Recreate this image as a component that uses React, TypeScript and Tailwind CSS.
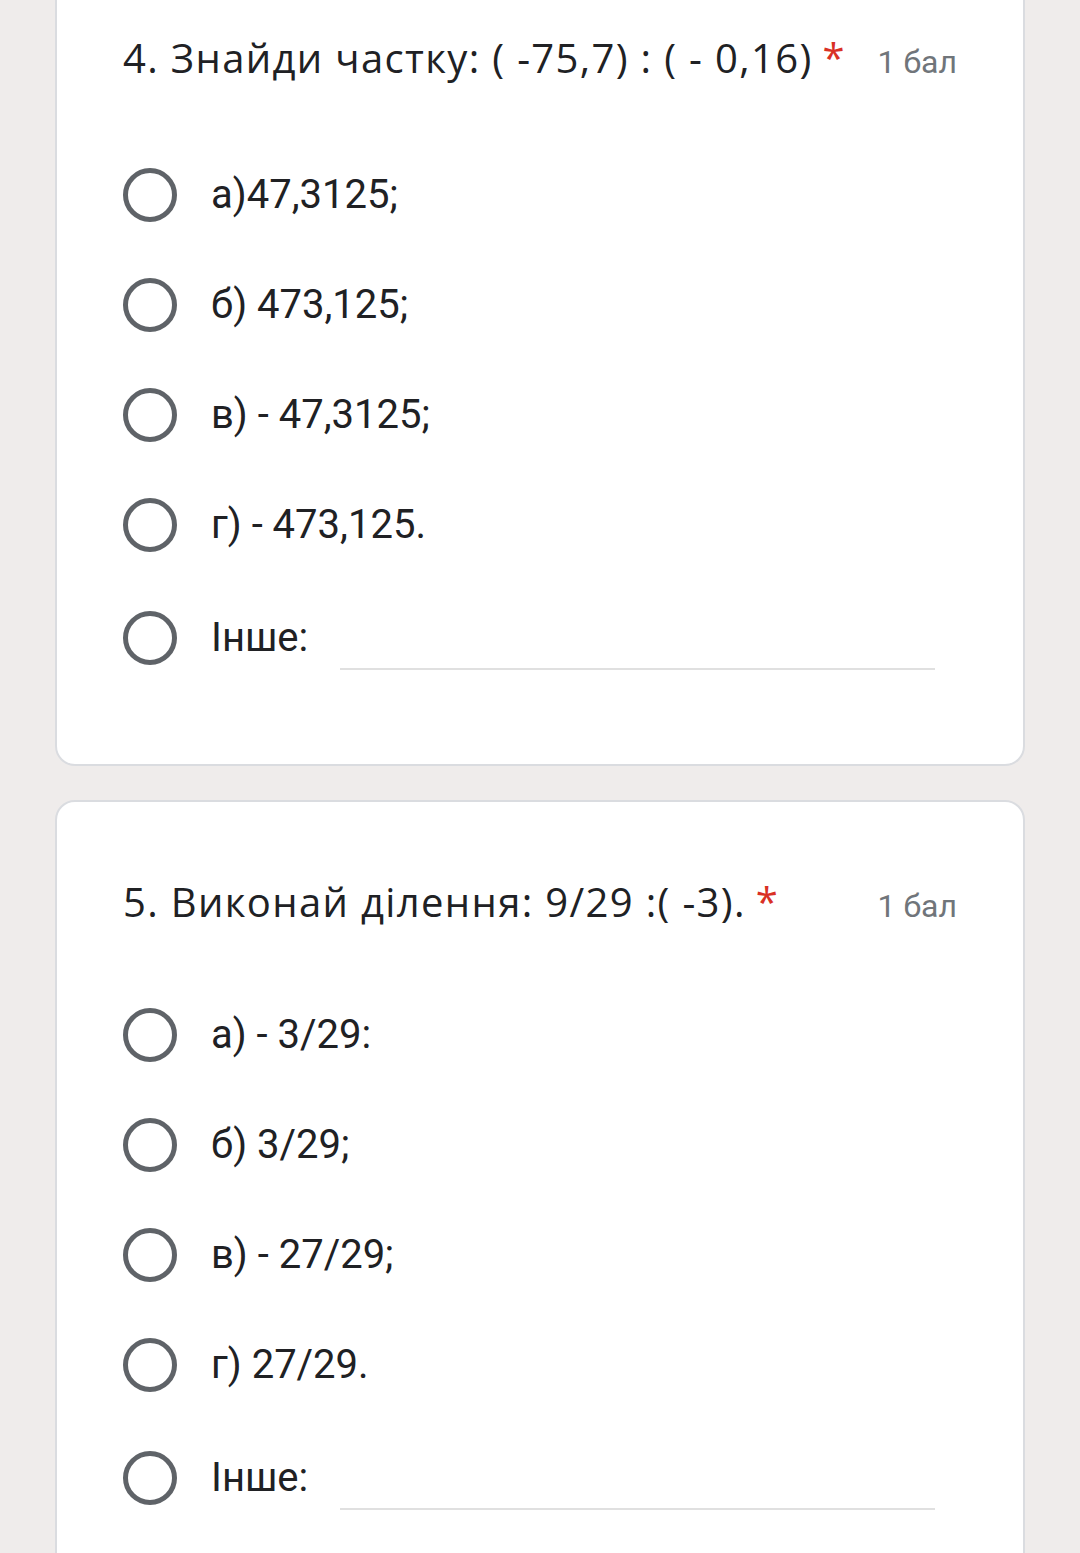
import React from 'react';

// Two Google Forms style multiple-choice question cards, mobile screenshot scale.

type Question = {
  title: string;
  points: string;
  options: string[];
};

const questions: Question[] = [
  {
    title: '4. Знайди частку: ( -75,7) : ( - 0,16)',
    points: '1 бал',
    options: ['а)47,3125;', 'б) 473,125;', 'в) - 47,3125;', 'г) - 473,125.'],
  },
  {
    title: '5. Виконай ділення: 9/29 :( -3).',
    points: '1 бал',
    options: ['а) - 3/29:', 'б) 3/29;', 'в) - 27/29;', 'г) 27/29.'],
  },
];

function Radio() {
  return <span className="block shrink-0 w-[54px] h-[54px] rounded-full border-[5px] border-[#5f6368]" />;
}

function QuestionCard({ q, className, listClass }: { q: Question; className?: string; listClass: string }) {
  return (
    <section
      className={
        'bg-white border-2 border-[#dadce0] rounded-[20px] pl-[66px] pr-[66px] pt-[76px] pb-[68px] ' + (className ?? '')
      }
    >
      <div className="h-[48px] flex items-baseline justify-between leading-[48px]">
        <h2 className="text-[40px] leading-[48px] text-[#202124] font-normal font-['Open_Sans',Roboto,sans-serif] tracking-[1.35px]">
          {q.title}
          <span className="text-[#d93025] ml-[10px]">*</span>
        </h2>
        <span className="text-[32px] leading-[44px] text-[#70757a] shrink-0">{q.points}</span>
      </div>

      <div className={'flex flex-col ' + listClass}>
        {q.options.map((o) => (
          <label key={o} className="h-[110px] flex items-center gap-[34px]">
            <Radio />
            <span className="text-[40px] text-[#202124] leading-[48px]">{o}</span>
          </label>
        ))}
        <label className="h-[116px] flex items-center">
          <Radio />
          <span className="ml-[34px] text-[40px] text-[#202124] leading-[48px]">Інше:</span>
          <div className="flex-1 ml-[32px] mr-[22px] h-[64px] border-b-2 border-[#e0e0e0]" />
        </label>
      </div>
    </section>
  );
}

export default function App() {
  return (
    <div
      className="min-h-screen bg-[#efeceb] overflow-hidden"
      style={{ fontFamily: 'Roboto, "Noto Sans", sans-serif' }}
    >
      <div className="mx-auto w-[970px] flex flex-col gap-[34px]">
        <QuestionCard q={questions[0]} className="-mt-[44px]" listClass="mt-[58px]" />
        <QuestionCard q={questions[1]} listClass="mt-[54px]" />
      </div>
    </div>
  );
}
